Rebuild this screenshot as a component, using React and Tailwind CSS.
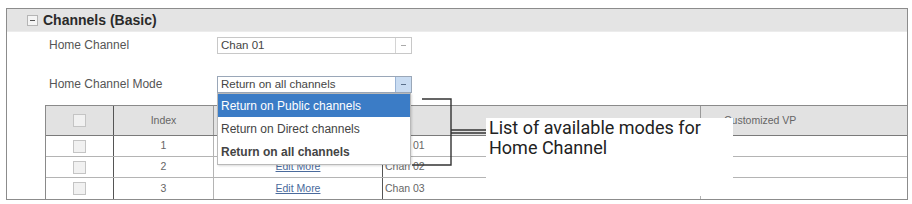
import React from "react";

const rows = [
  { idx: "1", name: "Chan 01" },
  { idx: "2", name: "Chan 02" },
  { idx: "3", name: "Chan 03" },
];

const modes = [
  { label: "Return on Public channels", active: true },
  { label: "Return on Direct channels" },
  { label: "Return on all channels", bold: true },
];

const Box = () => (
  <div className="w-[13px] h-[13px] border border-[#c4c4c4] bg-[#f1f1f1]"></div>
);

const Select = ({ value, open }) => (
  <div
    className={`flex w-[195px] h-[17px] border bg-white ${
      open ? "border-[#9aa7b8]" : "border-[#c8c8c8]"
    }`}
  >
    <div className="flex-1 pl-[3px] text-[11.5px] leading-[15px] text-[#444]">{value}</div>
    <div
      className={`w-[16px] flex items-center justify-center border-l ${
        open ? "border-[#9ab4d6] bg-[#c9dcf2]" : "border-[#d4d4d4] bg-white"
      }`}
    >
      <div className={`w-[5px] h-[1px] ${open ? "bg-[#5a6f8a]" : "bg-[#aaa]"}`}></div>
    </div>
  </div>
);

const App = () => {
  return (
    <div className="relative w-[912px] h-[204px] bg-white pt-[8px] pl-[6px] font-['Liberation_Sans',Arial,sans-serif]">
      <div className="relative w-[902px] h-[192px] border border-[#8c8c8c] flex flex-col">
        {/* section header */}
        <div className="h-[25px] bg-[#e4e4e4] flex items-center pl-[20px] gap-[5px] border-b border-[#ececec]">
          <div className="w-[11px] h-[11px] border border-[#b5b5b5] bg-[#f4f4f4] flex items-center justify-center">
            <div className="w-[5px] h-[1px] bg-[#555]"></div>
          </div>
          <span className="text-[14px] font-bold text-[#2a2a2a]">Channels (Basic)</span>
        </div>

        {/* form */}
        <div className="flex items-center mt-[4px] pl-[42px]">
          <div className="w-[168px] text-[12px] text-[#555]">Home Channel</div>
          <Select value="Chan 01" />
        </div>
        <div className="flex items-center mt-[21px] pl-[42px]">
          <div className="w-[168px] text-[12px] text-[#555]">Home Channel Mode</div>
          <Select value="Return on all channels" open />
        </div>

        {/* table */}
        <div className="mt-[12px] ml-[38px] flex-1 border-l border-t border-[#8a8a8a] text-[10.5px] text-[#666]">
          <div className="grid grid-cols-[68px_100px_169px_318px_1fr] h-[30px] bg-[#e2e2e2] border-b border-[#7a7a7a]">
            <div className="flex items-center justify-center border-r border-[#555]">
              <Box />
            </div>
            <div className="flex items-center justify-center border-r border-[#9a9a9a]">Index</div>
            <div className="border-r border-[#9a9a9a]"></div>
            <div className="border-r border-[#9a9a9a]"></div>
            <div className="flex items-center pl-[23px]">Customized VP</div>
          </div>
          {rows.map((r, i) => (
            <div
              key={r.idx}
              className={`grid grid-cols-[68px_100px_169px_318px_1fr] h-[21px] ${
                i < 2 ? "border-b border-[#b4b4b4]" : ""
              }`}
            >
              <div className="flex items-center justify-center border-r border-[#555]">
                <Box />
              </div>
              <div className="flex items-center justify-center border-r border-[#b4b4b4]">{r.idx}</div>
              <div className="flex items-center justify-center border-r border-[#555]">
                {i > 0 && <span className="underline text-[#4a6a9c]">Edit More</span>}
              </div>
              <div className="flex items-center pl-[2px] border-r border-[#b4b4b4]">{r.name}</div>
              <div></div>
            </div>
          ))}
        </div>

        {/* open dropdown list */}
        <div className="absolute left-[210px] top-[84px] w-[194px] h-[72px] bg-white border border-[#b9b9b9] shadow-[1px_1px_2px_rgba(0,0,0,0.15)] text-[12px] flex flex-col">
          {modes.map((m) => (
            <div
              key={m.label}
              className={`h-[24px] flex items-center pl-[3px] ${
                m.active ? "bg-[#3b7cc6] text-white" : "text-[#444]"
              } ${m.bold ? "font-bold text-[#333]" : ""}`}
            >
              {m.label}
            </div>
          ))}
        </div>
      </div>

      {/* callout */}
      <svg className="absolute left-0 top-0 pointer-events-none" width="912" height="204">
        <g stroke="#333" strokeWidth="1.4" fill="none">
          <path d="M422 99 H451 V165 H412" />
          <path d="M451 130 H488" />
          <path d="M451 133 H488" />
        </g>
      </svg>
      <div className="absolute left-[486px] top-[118px] w-[247px] h-[78px] bg-white pl-[3px] font-['Roboto',sans-serif] text-[18px] leading-[20px] text-[#222]">
        <div>List of available modes for</div>
        <div>Home Channel</div>
      </div>
    </div>
  );
};

export default App;
